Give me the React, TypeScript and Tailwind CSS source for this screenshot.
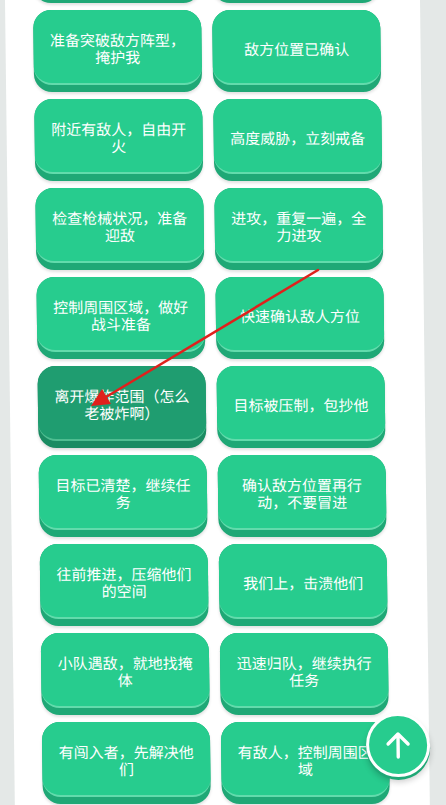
import React from "react";

type Item = { t: string; dark?: boolean };

const rows: [Item, Item][] = [
  [{ t: "" }, { t: "" }],
  [{ t: "准备突破敌方阵型，掩护我" }, { t: "敌方位置已确认" }],
  [{ t: "附近有敌人，自由开火" }, { t: "高度威胁，立刻戒备" }],
  [{ t: "检查枪械状况，准备迎敌" }, { t: "进攻，重复一遍，全力进攻" }],
  [{ t: "控制周围区域，做好战斗准备" }, { t: "快速确认敌人方位" }],
  [{ t: "离开爆炸范围（怎么老被炸啊）", dark: true }, { t: "目标被压制，包抄他" }],
  [{ t: "目标已清楚，继续任务" }, { t: "确认敌方位置再行动，不要冒进" }],
  [{ t: "往前推进，压缩他们的空间" }, { t: "我们上，击溃他们" }],
  [{ t: "小队遇敌，就地找掩体" }, { t: "迅速归队，继续执行任务" }],
  [{ t: "有闯入者，先解决他们" }, { t: "有敌人，控制周围区域" }],
];

function Btn({ item }: { item: Item }) {
  if (item.dark) {
    return (
      <div className="w-[168px] shrink-0 rounded-[18px] bg-[#1a8b62] pb-[7px] shadow-[0_2px_3px_rgba(0,0,0,0.15)]">
        <div className="flex h-[75px] items-center justify-center rounded-[18px] border-b-2 border-[#4fbd91] bg-[#1f9d70] px-[10px] pt-[3px] text-center text-[15px] leading-[17px] text-white">
          {item.t}
        </div>
      </div>
    );
  }
  return (
    <div className="w-[168px] shrink-0 rounded-[18px] bg-[#1fa876] pb-[7px] shadow-[0_2px_3px_rgba(0,0,0,0.12)]">
      <div className="flex h-[75px] items-center justify-center rounded-[18px] border-b-2 border-[#62dbac] bg-[#27cc8e] px-[10px] pt-[3px] text-center text-[15px] leading-[17px] text-white">
        {item.t}
      </div>
    </div>
  );
}

export default function App() {
  return (
    <div
      className="relative h-[805px] w-[446px] overflow-hidden bg-[#e4e8e7]"
      style={{ fontFamily: '"Noto Sans CJK SC", "Noto Sans", sans-serif' }}
    >
      <div className="relative flex h-[805px] w-[446px] origin-top-left skew-x-[0.7deg] flex-col">
        <div className="ml-[5px] flex h-[805px] w-[415px] flex-col overflow-hidden bg-white pl-[28px]">
          <div className="-mt-[79px] flex flex-col gap-[7px]">
            {rows.map((r, i) => (
              <div key={i} className="flex gap-[11px]">
                <Btn item={r[0]} />
                <Btn item={r[1]} />
              </div>
            ))}
          </div>
        </div>
        <div className="absolute left-[357px] top-[713px] flex h-[64px] w-[64px] items-center justify-center rounded-full border-[3px] border-white bg-[#27cc8e] shadow-[0_3px_0_#1fa876,0_5px_6px_rgba(0,0,0,0.2)]">
          <svg width="28" height="30" viewBox="0 0 28 30" fill="none">
            <path d="M14 27V4M4 14L14 4L24 14" stroke="white" strokeWidth="3.4" strokeLinecap="round" strokeLinejoin="round" />
          </svg>
        </div>
      </div>
      <svg className="absolute left-0 top-0" width="446" height="805" viewBox="0 0 446 805">
        <line x1="318" y1="270" x2="106" y2="397" stroke="#e0201c" strokeWidth="2.6" strokeLinecap="round" />
        <polygon points="91,406 102,389 111,404" fill="#e0201c" />
      </svg>
    </div>
  );
}
